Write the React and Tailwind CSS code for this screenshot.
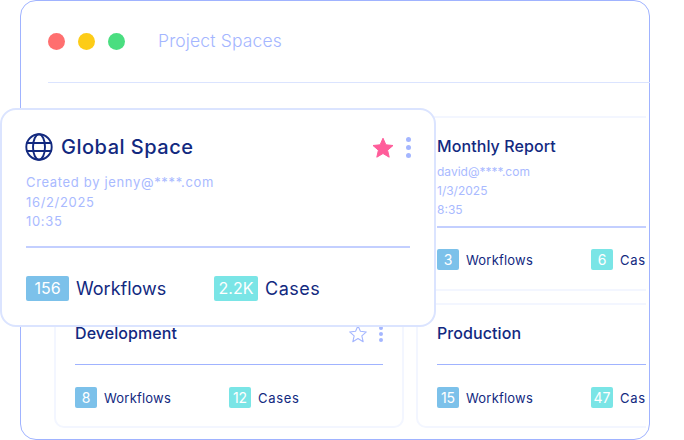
const Star = ({ filled, className }) => (
  <svg viewBox="0 0 24 24" className={className} fill={filled ? "#ff5c9a" : "none"} stroke={filled ? "#ff5c9a" : "#a4b6ff"} strokeWidth={filled ? 1 : 1.3} strokeLinejoin="round">
    <path d="M12 2.2l2.9 6.6 7.1.7-5.4 4.7 1.6 7-6.2-3.7-6.2 3.7 1.6-7L2 9.500l7.100-.7z" />
  </svg>
);

const Dots = ({ large }) => (
  <div className={large ? "flex flex-col gap-[3px]" : "flex flex-col gap-[2px]"}>
    <span className={large ? "w-[5px] h-[5px] rounded-full bg-[#a4b6ff]" : "w-[4px] h-[4px] rounded-full bg-[#a4b6ff]"} />
    <span className={large ? "w-[5px] h-[5px] rounded-full bg-[#a4b6ff]" : "w-[4px] h-[4px] rounded-full bg-[#a4b6ff]"} />
    <span className={large ? "w-[5px] h-[5px] rounded-full bg-[#a4b6ff]" : "w-[4px] h-[4px] rounded-full bg-[#a4b6ff]"} />
  </div>
);

const Globe = () => (
  <svg viewBox="0 0 28 28" className="w-[28px] h-[28px] shrink-0 -ml-[1px]" fill="none" stroke="#12297f" strokeWidth="1.9">
    <circle cx="14" cy="14" r="12.700" />
    <ellipse cx="14" cy="14" rx="6" ry="12.700" />
    <path d="M1.500 10h25M1.500 18h25" />
  </svg>
);

const Stat = ({ value, label, color, width, tracking }) => (
  <div className={`flex items-center gap-[7px] ${width}`}>
    <span className={`w-[22px] h-[21px] rounded-[2px] flex items-center justify-center text-white text-[14px] ${color}`}>{value}</span>
    <span className={`text-[13px] translate-y-[1px] text-[#12297f] ${tracking}`}>{label}</span>
  </div>
);

const Card = ({ title, meta, stats, star, className }) => (
  <div className={`w-[350px] shrink-0 border-2 border-[#f3f6ff] rounded-[10px] px-[19px] bg-white flex flex-col ${className}`}>
    {title && (
      <>
        <div className="flex items-center justify-between mt-[15px] h-[26px]">
          <span className="text-[16px] font-medium tracking-[0.08px] text-[#12297f]">{title}</span>
          {star && (
            <div className="flex items-center gap-[11px] translate-y-[1px]">
              <Star className="w-[20px] h-[20px]" />
              <Dots />
            </div>
          )}
        </div>
        {meta && (
          <div className="text-[12px] leading-[19px] text-[#a9baff] mt-[3px]">
            {meta.map((m) => <div key={m}>{m}</div>)}
          </div>
        )}
      </>
    )}
    {stats && (
      <>
        <div className={meta ? "border-t-2 border-[#c3cfff] mt-[7px]" : "border-t border-[#a0b3ff] mt-[18px]"} />
        <div className={meta ? "flex mt-[21px]" : "flex mt-[22px]"}>
          <Stat value={stats[0]} label="Workflows" color="bg-[#7cc1ea]" width="w-[154px]" tracking="tracking-[0.2px]" />
          <Stat value={stats[1]} label="Cases" color="bg-[#7ae5e6]" width="" tracking="tracking-[0.7px]" />
        </div>
      </>
    )}
  </div>
);

export default function App() {
  return (
    <div className="relative w-[684px] h-[440px] bg-white overflow-hidden font-['Inter',sans-serif]">
      <div className="ml-[20px] w-[630px] h-[440px] border border-[#a0b3ff] rounded-[16px] flex flex-col">
        <div className="ml-[27px] h-[82px] shrink-0 border-b border-[#dbe4ff] flex items-center gap-[13px] -mr-px">
          <span className="w-[17px] h-[17px] rounded-full bg-[#ff6f6f]" />
          <span className="w-[17px] h-[17px] rounded-full bg-[#fdcc17]" />
          <span className="w-[17px] h-[17px] rounded-full bg-[#4ade80]" />
          <span className="ml-[20px] text-[17.500px] tracking-[0.15px] font-light text-[#a4b6ff]">Project Spaces</span>
        </div>
        <div className="ml-[33px] mr-[3px] mt-[33px] overflow-hidden flex flex-col gap-[12px]">
          <div className="flex gap-[12px]">
            <Card className="h-[175px]" />
            <Card className="h-[175px]" title="Monthly Report" meta={["david@****.com", "1/3/2025", "8:35"]} stats={["3", "6"]} />
          </div>
          <div className="flex gap-[12px]">
            <Card className="h-[125px]" title="Development" star stats={["8", "12"]} />
            <Card className="h-[125px]" title="Production" stats={["15", "47"]} />
          </div>
        </div>
      </div>

      <div className="absolute left-0 top-[108px] w-[436px] h-[219px] bg-white border-2 border-[#dbe4ff] rounded-[16px] pl-[24px] pr-[24px] flex flex-col">
        <div className="flex items-center h-[28px] mt-[23px]">
          <Globe />
          <span className="ml-[8px] text-[20px] font-medium tracking-[0.5px] text-[#12297f]">Global Space</span>
          <div className="ml-auto flex items-center gap-[11px] -mr-[1px]">
            <Star filled className="w-[24px] h-[24px] translate-y-[1px]" />
            <Dots large />
          </div>
        </div>
        <div className="mt-[12px] text-[13px] tracking-[0.66px] leading-[19.500px] text-[#a9baff]">
          <div>Created by jenny@****.com</div>
          <div>16/2/2025</div>
          <div>10:35</div>
        </div>
        <div className="mt-[14px] border-t-2 border-[#c3cfff]" />
        <div className="flex mt-[27px]">
          <div className="flex items-center gap-[7px] w-[188px]">
            <span className="w-[43px] h-[25px] rounded-[2px] bg-[#7cc1ea] text-white text-[16px] flex items-center justify-center">156</span>
            <span className="text-[18px] text-[#12297f]">Workflows</span>
          </div>
          <div className="flex items-center gap-[7px]">
            <span className="w-[44px] h-[25px] rounded-[2px] bg-[#7ae5e6] text-white text-[16px] flex items-center justify-center">2.2K</span>
            <span className="text-[18px] tracking-[0.5px] text-[#12297f]">Cases</span>
          </div>
        </div>
      </div>
    </div>
  );
}
